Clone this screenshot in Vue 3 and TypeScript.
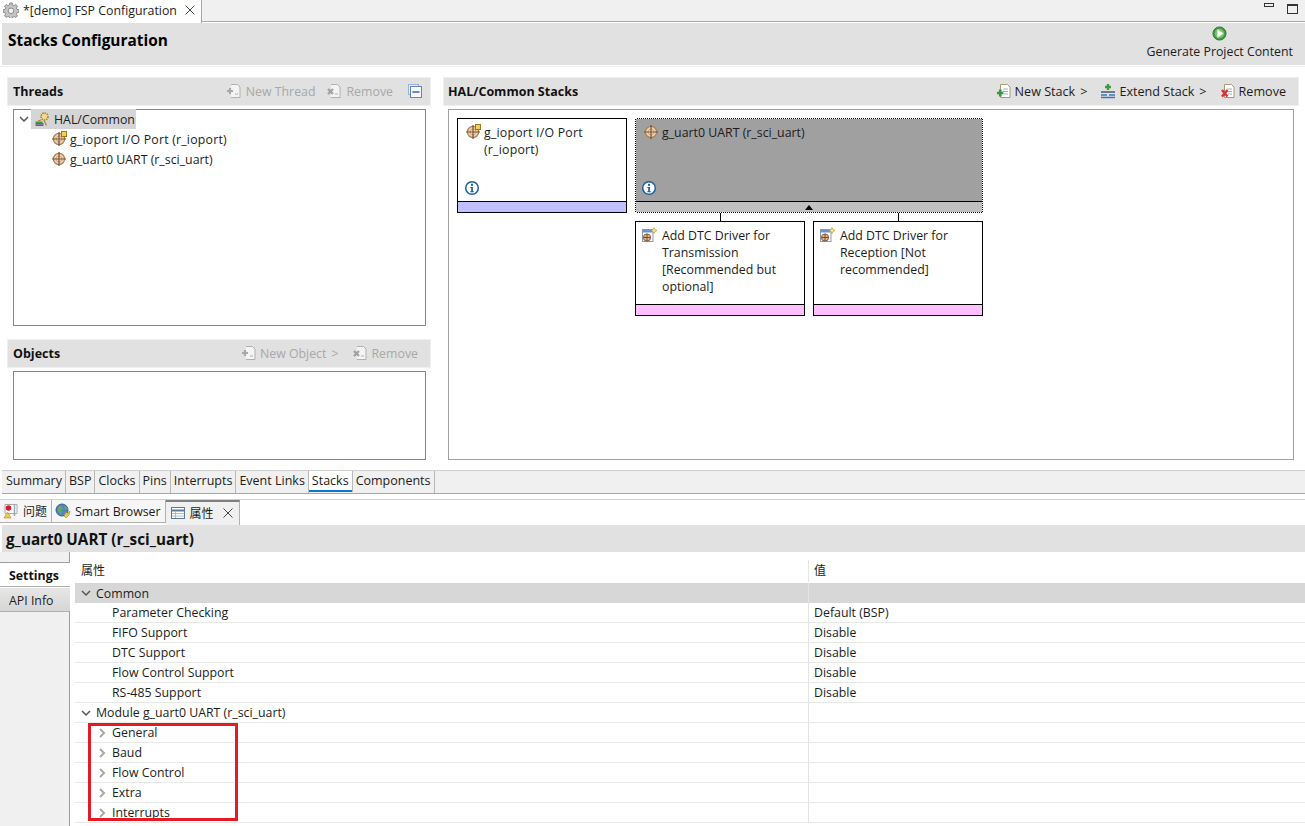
<script setup lang="ts">
const topTabs = ['Summary', 'BSP', 'Clocks', 'Pins', 'Interrupts', 'Event Links', 'Stacks', 'Components']
const commonRows = [
  ['Parameter Checking', 'Default (BSP)'],
  ['FIFO Support', 'Disable'],
  ['DTC Support', 'Disable'],
  ['Flow Control Support', 'Disable'],
  ['RS-485 Support', 'Disable'],
]
const moduleRows = ['General', 'Baud', 'Flow Control', 'Extra', 'Interrupts']
</script>

<template>
  <div class="app">
    <svg class="defs" width="0" height="0">
      <defs>
        <symbol id="globe" viewBox="0 0 16 16">
          <circle cx="8" cy="8" r="5.600" fill="#ecd0ac" stroke="#a57f5c" stroke-width="1.200" />
          <circle cx="8" cy="8" r="2.800" fill="#f6e6d0" stroke="#c09a70" stroke-width=".8" />
          <path d="M8 1v14M1 8h14" stroke="#7c4f2e" stroke-width="1.200" />
        </symbol>
        <symbol id="info" viewBox="0 0 16 16">
          <circle cx="8" cy="8" r="6.300" fill="#fff" stroke="#1c5f9c" stroke-width="1.500" />
          <rect x="7" y="3.800" width="2" height="2" fill="#1c5f9c" />
          <path d="M6.300 7h2.600v4.200h1v1H6.200v-1h1V8h-.9z" fill="#1c5f9c" />
        </symbol>
        <symbol id="doc" viewBox="0 0 16 16">
          <path d="M4.500 1.500h7l2.500 2.500v10.500h-9.500z" fill="#fff" stroke="#a89a70" />
          <path d="M7 6h5M7 8.500h5M8 11h4" stroke="#9ab0c8" />
        </symbol>
        <symbol id="docGrey" viewBox="0 0 16 16">
          <path d="M5 1.500h6.500l2.500 2.500v10.500H5" fill="#f4f4f4" stroke="#b0b0b0" />
          <path d="M9 11h3" stroke="#b0b0b0" />
        </symbol>
        <symbol id="adddtc" viewBox="0 0 16 16">
          <rect x="1.500" y="2.500" width="10.500" height="12" fill="#fff" stroke="#8a9aaa" />
          <rect x="2" y="3" width="9.500" height="2.500" fill="#6f94c4" />
          <circle cx="6" cy="10.500" r="3.600" fill="#e0b890" stroke="#8a5a3a" />
          <path d="M6 6.800v7.400M2.400 10.500h7.200" stroke="#7a4a2a" />
          <path d="M13 .5l1 2 2 1-2 1-1 2-1-2-2-1 2-1z" fill="#f8e8a0" stroke="#b89a30" stroke-width=".7" />
        </symbol>
      </defs>
    </svg>

    <div class="editor-tabs">
      <div class="editor-tab">
        <svg class="ico16" viewBox="0 0 16 16">
          <path d="M6.800 1h2.400l.4 2 1.500.6 1.700-1.100 1.700 1.700-1.100 1.700.6 1.500 2 .4v2.400l-2 .4-.6 1.500 1.100 1.700-1.700 1.700-1.700-1.100-1.500.6-.4 2H6.800l-.4-2-1.500-.6-1.700 1.100-1.700-1.700 1.100-1.700-.6-1.500-2-.4V7.800l2-.4.6-1.500-1.100-1.700 1.700-1.700 1.700 1.100 1.500-.6z" fill="#c4c4c4" stroke="#8c8c8c" />
          <circle cx="8" cy="8.800" r="2.800" fill="#f2f2f2" stroke="#8c8c8c" />
        </svg>
        <span class="editor-title">*[demo] FSP Configuration</span>
        <svg class="close" viewBox="0 0 10 10"><path d="M.5.5l9 9M9.500.5l-9 9" stroke="#444" fill="none" /></svg>
      </div>
      <div class="editor-rest">
        <span class="min-btn"></span>
        <span class="max-btn"></span>
      </div>
    </div>

    <div class="page-head">
      <h1>Stacks Configuration</h1>
      <div class="generate">
        <svg class="gen-ico" viewBox="0 0 16 16">
          <circle cx="8" cy="8" r="7" fill="#3f9a40" stroke="#2f7a38" />
          <circle cx="8" cy="8" r="5" fill="#7cc070" />
          <path d="M5.800 3.800v8.400L12 8z" fill="#fff" stroke="#d8e8d0" stroke-width=".6" />
        </svg>
        <span>Generate Project Content</span>
      </div>
    </div>

    <div class="workspace">
      <div class="left-col">
        <section class="threads">
          <div class="sec-head">
            <b>Threads</b>
            <div class="tools disabled thread-tools">
              <span class="tool">
                <svg class="ico16" viewBox="0 0 16 16"><use href="#docGrey" /><path d="M1 8h6M4 5v6" stroke="#a8a8a8" stroke-width="2.200" /></svg>New Thread
              </span>
              <span class="tool">
                <svg class="ico16" viewBox="0 0 16 16"><use href="#docGrey" /><path d="M2 6l5 5M7 6l-5 5" stroke="#a0a0a0" stroke-width="2.200" /></svg>Remove
              </span>
              <svg class="ico16 collapse" viewBox="0 0 16 16">
                <rect x="1.500" y="1.500" width="10" height="10" fill="#e8eef6" stroke="#9cb4d0" />
                <rect x="3.500" y="3.500" width="11" height="11" fill="#f4f7fb" stroke="#5f86b4" />
                <path d="M5.500 9h7" stroke="#2f5f98" stroke-width="1.400" />
              </svg>
            </div>
          </div>
          <div class="tree">
            <div class="tree-root">
              <svg class="chev" viewBox="0 0 10 10"><path d="M1 3l4 4 4-4" fill="none" stroke="#555" stroke-width="1.500" /></svg>
              <span class="root-label">
                <svg class="ico16" viewBox="0 0 16 16">
                  <path d="M1.500 10.500h7v1.500h-7z" fill="#3f9a50" />
                  <path d="M1.500 12h8v1.500h-8z" fill="#c84030" />
                  <path d="M1.500 13.500h8V15h-8z" fill="#3a70b0" />
                  <circle cx="10.500" cy="5.500" r="3.500" fill="#f0d890" stroke="#a8842c" stroke-width="1.500" stroke-dasharray="1.500 .8" />
                  <path d="M7 9l-3 1M10 9.500l2.500 5" stroke="#a8842c" stroke-width="1.200" />
                </svg>
                HAL/Common
              </span>
            </div>
            <div class="tree-item">
              <span class="ico-wrap">
                <svg class="ico16" viewBox="0 0 16 16"><use href="#globe" /></svg>
                <i class="badge"></i>
              </span>
              <span class="wide">g_ioport I/O Port (r_ioport)</span>
            </div>
            <div class="tree-item">
              <svg class="ico16" viewBox="0 0 16 16"><use href="#globe" /></svg>
              g_uart0 UART (r_sci_uart)
            </div>
          </div>
        </section>

        <section class="objects">
          <div class="sec-head">
            <b>Objects</b>
            <div class="tools disabled obj-tools">
              <span class="tool">
                <svg class="ico16" viewBox="0 0 16 16"><use href="#docGrey" /><path d="M1 8h6M4 5v6" stroke="#a8a8a8" stroke-width="2.200" /></svg>New Object<span class="more">&gt;</span>
              </span>
              <span class="tool">
                <svg class="ico16" viewBox="0 0 16 16"><use href="#docGrey" /><path d="M2 6l5 5M7 6l-5 5" stroke="#a0a0a0" stroke-width="2.200" /></svg>Remove
              </span>
            </div>
          </div>
          <div class="objects-box"></div>
        </section>
      </div>

      <section class="right-col">
        <div class="sec-head">
          <b>HAL/Common Stacks</b>
          <div class="tools right-tools">
            <span class="tool">
              <svg class="ico16" viewBox="0 0 16 16"><use href="#doc" /><path d="M1 10h6.500M4.250 6.500V13.500" stroke="#2f9a40" stroke-width="2.600" /></svg>New Stack<span class="more">&gt;</span>
            </span>
            <span class="tool">
              <svg class="ico16" viewBox="0 0 16 16">
                <path d="M8 1v6M5 4h6" stroke="#3f9a40" stroke-width="2.400" />
                <path d="M1 9h14" stroke="#405870" stroke-width="1.500" />
                <path d="M1 12h6M9 12h6M1 14.500h14" stroke="#3a78b8" stroke-width="1.500" />
              </svg>Extend Stack<span class="more">&gt;</span>
            </span>
            <span class="tool">
              <svg class="ico16" viewBox="0 0 16 16"><use href="#doc" /><path d="M2 7l5.500 6.500M7.500 7L2 13.500" stroke="#d83030" stroke-width="2.400" /></svg>Remove
            </span>
          </div>
        </div>
        <div class="canvas">
          <div class="stack-cols">
            <div class="card blue-card">
              <div class="card-body">
                <div class="card-text">
                  <span class="ico-wrap">
                    <svg class="ico16" viewBox="0 0 16 16"><use href="#globe" /></svg>
                    <i class="badge"></i>
                  </span>
                  <span class="wide">g_ioport I/O Port (r_ioport)</span>
                </div>
                <svg class="ico16 info" viewBox="0 0 16 16"><use href="#info" /></svg>
              </div>
              <div class="card-foot"></div>
            </div>

            <div class="uart-col">
              <div class="card selected">
                <div class="card-body">
                  <div class="card-text">
                    <svg class="ico16" viewBox="0 0 16 16"><use href="#globe" /></svg>
                    <span>g_uart0 UART (r_sci_uart)</span>
                  </div>
                  <svg class="ico16 info" viewBox="0 0 16 16"><use href="#info" /></svg>
                </div>
                <div class="card-foot"><i class="tri"></i></div>
              </div>
              <div class="children">
                <div class="child">
                  <i class="link"></i>
                  <div class="card pink-card">
                    <div class="card-body">
                      <div class="card-text">
                        <svg class="ico16" viewBox="0 0 16 16"><use href="#adddtc" /></svg>
                        <span>Add DTC Driver for Transmission [Recommended but optional]</span>
                      </div>
                    </div>
                    <div class="card-foot"></div>
                  </div>
                </div>
                <div class="child">
                  <i class="link"></i>
                  <div class="card pink-card">
                    <div class="card-body">
                      <div class="card-text">
                        <svg class="ico16" viewBox="0 0 16 16"><use href="#adddtc" /></svg>
                        <span>Add DTC Driver for Reception [Not recommended]</span>
                      </div>
                    </div>
                    <div class="card-foot"></div>
                  </div>
                </div>
              </div>
            </div>
          </div>
        </div>
      </section>
    </div>

    <div class="page-tabs">
      <span v-for="t in topTabs" :key="t" class="page-tab" :class="{ active: t === 'Stacks' }">{{ t }}</span>
    </div>

    <div class="view-tabs">
      <span class="view-tab">
        <svg class="ico16" viewBox="0 0 16 16">
          <path d="M2 1.500h12v9H2z" fill="#fff" stroke="#a8a8a8" />
          <circle cx="5.500" cy="5" r="2.800" fill="#d81e2c" />
          <path d="M11.500 2v11" stroke="#9aa8b8" stroke-width="1.500" />
          <path d="M4.500 9L8 15H1z" fill="#f4c850" stroke="#b88a20" stroke-width=".6" />
        </svg><span class="cjk">问题</span>
      </span>
      <span class="view-tab">
        <svg class="ico16" viewBox="0 0 16 16">
          <circle cx="7" cy="7" r="6" fill="#4f88c0" stroke="#2f5f90" />
          <path d="M3 4l3-1 2 2-2 2 1 3-2 1-2-4zM9 3l3 1 1 3-3-1z" fill="#6aa860" />
          <path d="M11 9l1.500 1.500L15 8l-1 4-3 3-2-2z" fill="#e8c860" stroke="#a88a30" stroke-width=".6" />
        </svg>Smart Browser
      </span>
      <span class="view-tab active">
        <svg class="ico16" viewBox="0 0 16 16">
          <rect x="1.500" y="2.500" width="13" height="11" fill="#fff" stroke="#5a7a9a" />
          <path d="M1.500 5.500h13" stroke="#5a7a9a" stroke-width="2" />
          <path d="M5.500 6v7M2 8.500h12M2 11h12" stroke="#a8bccc" />
        </svg><span class="cjk">属性</span>
        <svg class="close" viewBox="0 0 10 10"><path d="M.5.5l9 9M9.500.5l-9 9" stroke="#444" fill="none" /></svg>
      </span>
    </div>

    <div class="prop-head">g_uart0 UART (r_sci_uart)</div>

    <div class="props">
      <aside class="side">
        <div class="side-tab on">Settings</div>
        <div class="side-tab">API Info</div>
      </aside>
      <div class="table-wrap">
        <div class="row head">
          <span class="c1 cjk">属性</span>
          <span class="c2 cjk">值</span>
        </div>
        <div class="row group common">
          <span class="c1">
            <svg class="chev" viewBox="0 0 10 10"><path d="M1 3l4 4 4-4" fill="none" stroke="#555" stroke-width="1.500" /></svg>Common
          </span>
          <span class="c2"></span>
        </div>
        <div v-for="r in commonRows" :key="r[0]" class="row">
          <span class="c1 lvl2">{{ r[0] }}</span>
          <span class="c2">{{ r[1] }}</span>
        </div>
        <div class="row group">
          <span class="c1">
            <svg class="chev" viewBox="0 0 10 10"><path d="M1 3l4 4 4-4" fill="none" stroke="#555" stroke-width="1.500" /></svg>Module g_uart0 UART (r_sci_uart)
          </span>
          <span class="c2"></span>
        </div>
        <div v-for="m in moduleRows" :key="m" class="row">
          <span class="c1 has-chev">
            <svg class="chev-r" viewBox="0 0 10 10"><path d="M3 1l4 4-4 4" fill="none" stroke="#a8a8a8" stroke-width="2" /></svg>{{ m }}
          </span>
          <span class="c2"></span>
        </div>
        <div class="red-box"></div>
      </div>
    </div>
  </div>
</template>

<style>
html, body { margin: 0; background: #fff; }
</style>

<style scoped>
.app {
  width: 1305px;
  height: 826px;
  overflow: hidden;
  position: relative;
  display: flex;
  flex-direction: column;
  font-family: "Open Sans", "Noto Sans CJK SC", sans-serif;
  font-size: 12.35px;
  color: #1c1c1c;
  background: #fff;
}
.defs { position: absolute; }
.ico16 { width: 16px; height: 16px; flex: none; display: block; }
.close { width: 10px; height: 10px; flex: none; }
.cjk { font-size: 12px; }
.wide { letter-spacing: .2px; }

.editor-tabs { height: 23px; display: flex; flex: none; }
.editor-tab {
  width: 202px;
  box-sizing: border-box;
  border-right: 1px solid #a8a8a8;
  display: flex;
  align-items: center;
  padding: 0 0 3px 3px;
  background: #fff;
}
.editor-title { margin-left: 4px; white-space: nowrap; flex: 1; }
.editor-tab .close { margin-right: 6px; }
.editor-rest {
  flex: 1;
  background: #f0f0f0;
  border-bottom: 1px solid #a8a8a8;
  height: 21px;
  display: flex;
  justify-content: flex-end;
  gap: 13px;
  padding-right: 7px;
}
.min-btn { width: 8px; height: 2px; border: 1px solid #333; margin-top: 3px; }
.max-btn { width: 9px; height: 7px; border: 1px solid #333; border-top-width: 2px; margin-top: 4px; }

.page-head {
  height: 42px;
  margin: 0 0 0 2px;
  background: #e1e1e1;
  display: flex;
  justify-content: space-between;
  flex: none;
}
.page-head h1 { margin: 0; padding: 8px 0 0 6px; font-size: 15.4px; line-height: 20px; font-weight: 700; color: #000; }
.generate { display: flex; flex-direction: column; align-items: center; padding: 3px 12px 0 0; }
.gen-ico { width: 15px; height: 15px; margin-bottom: 2px; }

.workspace {
  height: 405px;
  flex: none;
  margin-top: 1px;
  border-top: 1px solid #eee;
  box-sizing: border-box;
  padding: 11px 7px 0 8px;
  display: flex;
  gap: 14px;
}
.left-col { width: 422px; display: flex; flex-direction: column; flex: none; }
.right-col { flex: 1; display: flex; flex-direction: column; }
.sec-head {
  height: 27px;
  background: #e1e1e1;
  display: flex;
  align-items: center;
  justify-content: space-between;
  padding: 0 12px 1px 5px;
  box-sizing: border-box;
  flex: none;
  box-shadow: 0 0 0 1px #f0f0f0;
}
.right-col .sec-head { padding-left: 4px; }
.sec-head b { font-size: 12.5px; font-weight: 700; color: #111; }
.tools { display: flex; align-items: center; gap: 12px; }
.tool { display: flex; align-items: center; gap: 3px; white-space: nowrap; }
.more { margin-left: 2px; }
.disabled { color: #a8a8a8; }
.thread-tools { gap: 11px; }
.thread-tools .tool { gap: 4px; }
.obj-tools { gap: 14px; }
.collapse { margin-left: 3px; margin-right: -5px; }
.right-tools { gap: 13px; color: #1c1c1c; font-size: 12.6px; }

.threads { display: flex; flex-direction: column; }
.tree {
  margin: 4px 4px 0 5px;
  height: 217px;
  box-sizing: border-box;
  border: 1px solid #868686;
}
.tree-root { display: flex; align-items: center; height: 20px; padding-left: 5px; margin-top: -1px; }
.chev { width: 10px; height: 10px; flex: none; margin-right: 5px; }
.root-label {
  display: flex; align-items: center; gap: 4px;
  background: #d5d5d5;
  height: 20px;
  padding: 0 1px 0 3px;
  margin-left: -3px;
}
.tree-item { display: flex; align-items: center; gap: 3px; height: 20px; padding-left: 37px; white-space: nowrap; }
.ico-wrap { position: relative; display: block; width: 16px; height: 16px; flex: none; }
.badge { position: absolute; right: 0; top: 0; width: 4px; height: 4px; background: #f6d050; border: 1px solid #9a7a20; }

.objects { margin-top: 14px; display: flex; flex-direction: column; }
.objects-box {
  margin: 4px 4px 0 5px;
  height: 89px;
  box-sizing: border-box;
  border: 1px solid #868686;
}

.canvas {
  margin: 4px 4px 0 4px;
  height: 351px;
  box-sizing: border-box;
  border: 1px solid #a0a0a0;
  padding: 8px;
}
.stack-cols { display: flex; gap: 8px; align-items: flex-start; }
.card {
  box-sizing: border-box;
  width: 170px;
  height: 95px;
  border: 1px solid #000;
  display: flex;
  flex-direction: column;
  background: #fff;
}
.card-body { flex: 1; position: relative; padding: 5px 7px; line-height: 17px; }
.card-text { display: flex; gap: 3px; }
.pink-card .card-body { padding-left: 5px; }
.pink-card .card-text { gap: 5px; }
.card-foot { height: 10px; border-top: 1px solid #000; position: relative; }
.info { position: absolute; left: 6px; bottom: 5px; }
.blue-card .card-foot { background: #c0c0ff; }
.pink-card .card-foot { background: #ffc0ff; }
.uart-col { width: 348px; }
.selected {
  width: 348px;
  outline: 1px dotted #fff;
  outline-offset: -1px;
}
.selected .card-body { background: #a0a0a0; }
.selected .info { left: 5px; }
.selected .card-foot { background: #c0c0c0; }
.tri {
  position: absolute; left: 169px; top: 3px;
  width: 0; height: 0;
  border-left: 4px solid transparent;
  border-right: 4px solid transparent;
  border-bottom: 5px solid #000;
}
.children { display: flex; gap: 8px; }
.child { width: 170px; display: flex; flex-direction: column; align-items: center; }
.link { width: 1px; height: 8px; background: #000; }

.page-tabs {
  height: 23px;
  flex: none;
  box-sizing: border-box;
  background: #f0f0f0;
  display: flex;
  margin-left: 2px;
  border-bottom: 1px solid #a8a8a8;
  box-shadow: 0 -1px 0 #d0d0d0;
  font-size: 12.5px;
}
.page-tab {
  padding: 0 3px 0 3px;
  line-height: 20px;
  border-right: 1px solid #b8b8b8;
  white-space: nowrap;
}
.page-tab:first-child { padding-left: 4px; }
.page-tab.active { box-shadow: inset 0 -2px 0 #0a78d0; background: #fff; height: 21px; }

.view-tabs {
  height: 26px;
  margin-top: 5px;
  flex: none;
  display: flex;
  align-items: flex-start;
  border-top: 1px solid #d0d0d0;
  box-sizing: border-box;
}
.view-tab {
  display: flex;
  align-items: center;
  gap: 4px;
  height: 23px;
  box-sizing: border-box;
  padding: 0 4px 0 3px;
  background: #f6f6f6;
  border-right: 1px solid #b0b0b0;
  border-bottom: 1px solid #b0b0b0;
}
.view-tab.active {
  background: #f0f0f0;
  border-top: 2px solid #808080;
  border-bottom: none;
  height: 25px;
  padding: 0 0 2px 4px;
  gap: 4px;
}
.view-tab.active .close { margin: 0 6px 0 5px; }

.prop-head {
  height: 27px;
  flex: none;
  background: #e1e1e1;
  margin-left: 2px;
  padding-left: 4px;
  font-size: 15.25px;
  font-weight: 700;
  line-height: 29px;
  color: #111;
}

.props { flex: 1; display: flex; min-height: 0; }
.side {
  width: 69px;
  flex: none;
  background: #f0f0f0;
  border-right: 1px solid #a0a0a0;
  padding-top: 10px;
}
.side-tab {
  height: 25px;
  line-height: 25px;
  padding-left: 9px;
  background: linear-gradient(#e6e6e6, #d6d6d6);
  border-bottom: 1px solid #b0b0b0;
  border-top: 1px solid #fff;
  width: 70px;
  box-sizing: border-box;
}
.side-tab.on {
  background: #fff;
  font-weight: 700;
  position: relative;
  border-top: 1px solid #a0a0a0;
  color: #111;
}
.table-wrap { position: relative; flex: 1; padding: 7px 0 0 5px; }
.row {
  display: flex;
  height: 20px;
  box-sizing: border-box;
  border-bottom: 1px solid #e8e8e8;
  line-height: 19px;
  white-space: nowrap;
}
.row.head { height: 22px; margin: 1px 0; line-height: 22px; border-bottom: none; }
.c1 { width: 734px; flex: none; box-sizing: border-box; border-right: 1px solid #e4e4e4; padding-left: 6px; display: flex; align-items: center; }
.c2 { flex: 1; padding-left: 5px; }
.lvl2 { padding-left: 37px; }
.has-chev { padding-left: 22px; }
.chev-r { width: 10px; height: 10px; margin-right: 5px; flex: none; }
.row.common { background: #d7d7d7; border-bottom: none; }
.red-box {
  position: absolute;
  left: 18px;
  top: 171px;
  width: 150px;
  height: 98px;
  box-sizing: border-box;
  border: 3px solid #e21b25;
}
</style>
